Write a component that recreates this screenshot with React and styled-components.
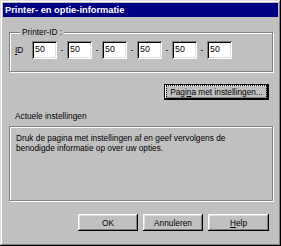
import React from 'react'
import styled, { createGlobalStyle } from 'styled-components'

const GlobalStyle = createGlobalStyle`
  html, body {
    margin: 0;
    padding: 0;
    background: #c0c0c0;
  }
`

const Window = styled.div`
  width: 281px;
  height: 246px;
  box-sizing: border-box;
  padding: 3px;
  background: #c0c0c0;
  box-shadow: inset -1px -1px #000, inset 1px 1px #dfdfdf,
    inset -2px -2px #808080, inset 2px 2px #fff;
  display: flex;
  flex-direction: column;
  font-family: 'Liberation Sans', Arial, sans-serif;
  font-size: 8.3px;
  color: #000;
`

const TitleBar = styled.div`
  height: 14px;
  background: #000080;
  color: #fff;
  font-weight: bold;
  font-size: 9.3px;
  line-height: 14px;
  padding-left: 2px;
`

const Body = styled.div`
  flex: 1;
  display: flex;
  flex-direction: column;
  padding: 0 5px 0 6px;
`

const Group = styled.fieldset`
  margin: 10px 0 0 0;
  padding: 4px 0 12px 5px;
  min-width: 0;
  border: 1px solid #808080;
  box-shadow: inset 1px 1px #fff, 1px 1px #fff;
`

const Legend = styled.legend`
  padding: 0 2px;
  margin-left: 5px;
  line-height: 10px;
  background: #c0c0c0;
`

const IdRow = styled.div`
  display: flex;
  align-items: center;
`

const Underline = styled.span`
  text-decoration: underline;
`

const IdLabel = styled.span`
  width: 17px;
`

const Field = styled.div`
  width: 25px;
  height: 18px;
  box-sizing: border-box;
  background: #fff;
  padding: 2px 0 0 3px;
  line-height: 12px;
  font-size: 8.8px;
  box-shadow: inset 1px 1px #808080, inset -1px -1px #fff,
    inset 2px 2px #000, inset -2px -2px #dfdfdf;
`

const Dash = styled.span`
  width: 10px;
  text-align: center;
`

const RightRow = styled.div`
  display: flex;
  justify-content: flex-end;
  gap: 5px;
  padding-right: 4px;
  margin-top: ${({ top }) => top}px;
`

const Button = styled.div`
  width: ${({ w }) => w}px;
  height: ${({ h }) => h}px;
  box-sizing: border-box;
  display: flex;
  align-items: center;
  justify-content: center;
  line-height: 10px;
  box-shadow: inset -1px -1px #000, inset 1px 1px #fff,
    inset -2px -2px #808080, inset 2px 2px #dfdfdf;
`

const DefaultButton = styled(Button)`
  box-shadow: inset 0 0 0 1px #000, inset -2px -2px #000, inset 2px 2px #fff,
    inset -3px -3px #808080;
`

const Focus = styled.span`
  border: 1px dotted #000;
  padding: 1px 3px;
`

const SectionLabel = styled.div`
  margin: 11px 0 0 6px;
  line-height: 10px;
`

const InfoBox = styled.div`
  margin-top: 5px;
  height: 75px;
  box-sizing: border-box;
  padding: 6px 6px;
  line-height: 10px;
  border: 1px solid #808080;
  box-shadow: inset 1px 1px #fff, 1px 1px #fff;
`

const ids = ['50', '50', '50', '50', '50', '50']

export default function App() {
  return (
    <>
      <GlobalStyle />
      <Window>
        <TitleBar>Printer- en optie-informatie</TitleBar>
        <Body>
          <Group>
            <Legend>Printer-ID :</Legend>
            <IdRow>
              <IdLabel>
                <Underline>I</Underline>D
              </IdLabel>
              {ids.map((v, i) => (
                <React.Fragment key={i}>
                  {i > 0 && <Dash>-</Dash>}
                  <Field>{v}</Field>
                </React.Fragment>
              ))}
            </IdRow>
          </Group>
          <RightRow top={12}>
            <DefaultButton w={105} h={16}>
              <Focus>
                Pagi<Underline>n</Underline>a met instellingen...
              </Focus>
            </DefaultButton>
          </RightRow>
          <SectionLabel>Actuele instellingen</SectionLabel>
          <InfoBox>
            Druk de pagina met instellingen af en geef vervolgens de
            <br />
            benodigde informatie op over uw opties.
          </InfoBox>
          <RightRow top={13}>
            <Button w={60} h={17}>OK</Button>
            <Button w={60} h={17}>Annuleren</Button>
            <Button w={61} h={17}>
              <span>
                <Underline>H</Underline>elp
              </span>
            </Button>
          </RightRow>
        </Body>
      </Window>
    </>
  )
}
